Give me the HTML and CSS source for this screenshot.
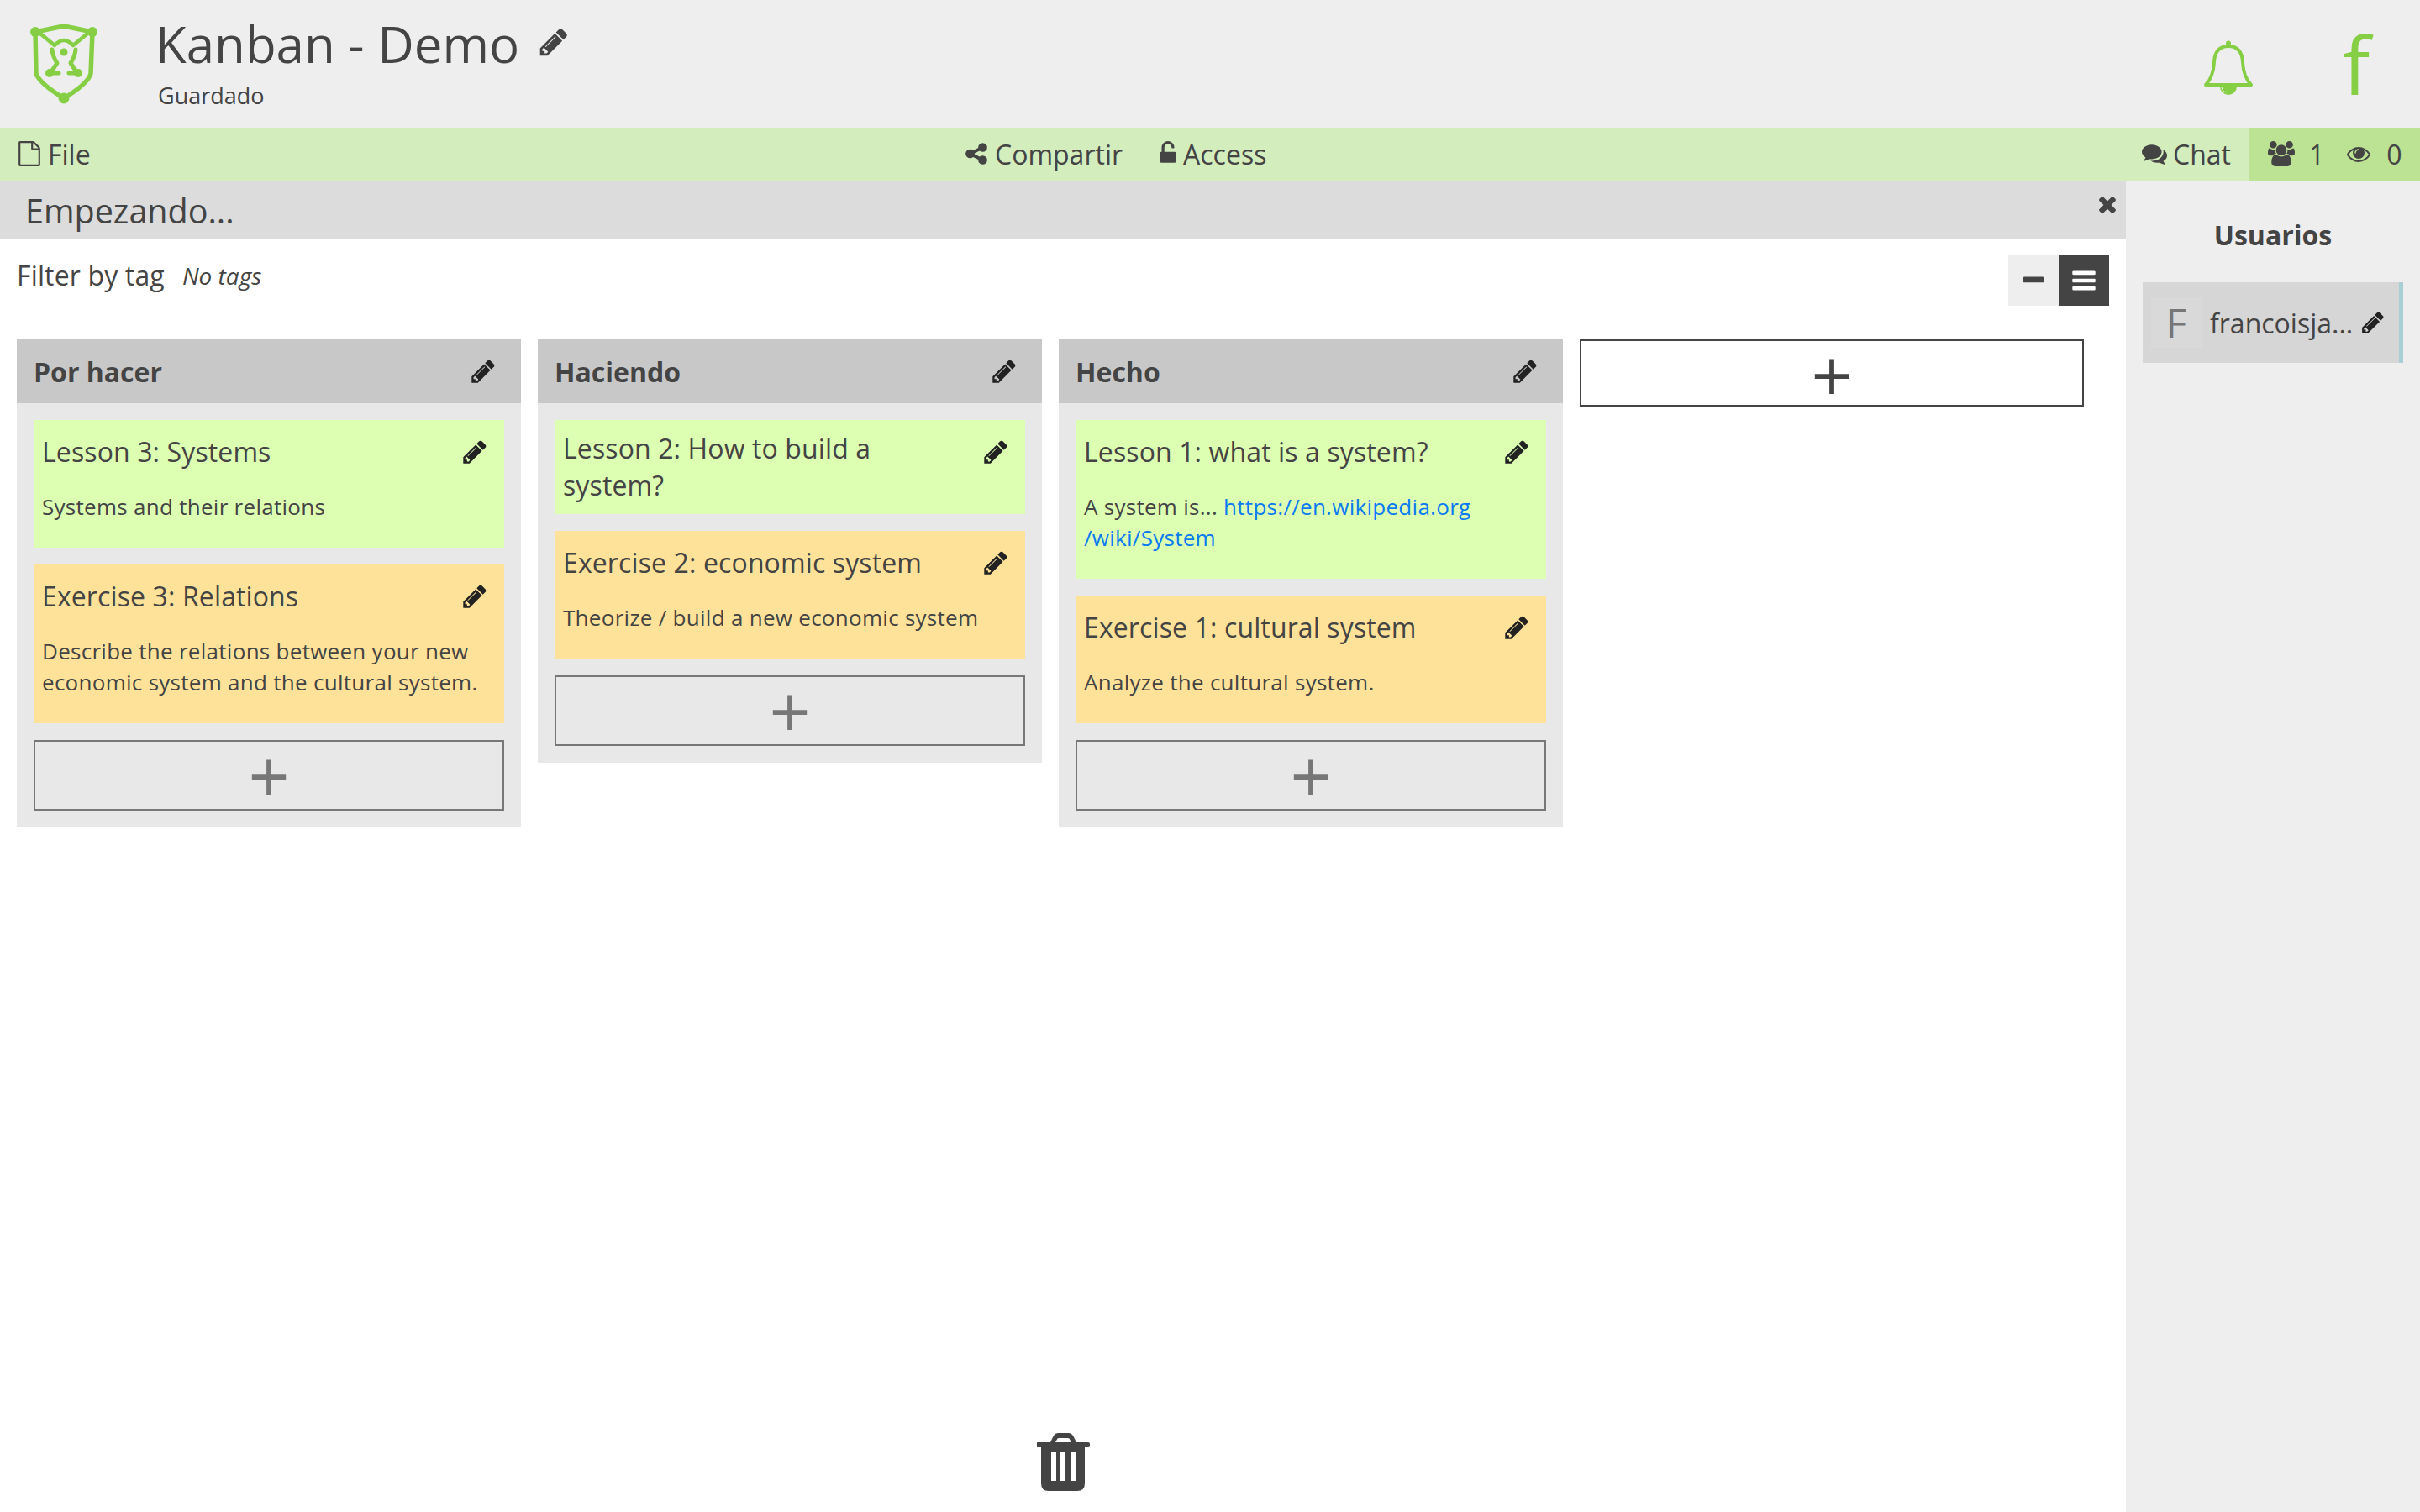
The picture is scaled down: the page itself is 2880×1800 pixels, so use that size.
FILE: index.html
```html
<!DOCTYPE html>
<html lang="en">
<head>
<meta charset="utf-8">
<title>Kanban - Demo</title>
<link rel="stylesheet" href="styles.css">
</head>
<body>
<svg class="defs" width="0" height="0" aria-hidden="true">
<symbol id="i-pencil" viewBox="0 0 1792 1792"><path d="M491 1536l91-91-235-235-91 91v107h128v128h107zm523-928q0-22-22-22-10 0-17 7l-542 542q-7 7-7 17 0 22 22 22 10 0 17-7l542-542q7-7 7-17zm-54-192l416 416-832 832h-416v-416zm683 96q0 53-37 90l-166 166-416-416 166-165q36-38 90-38 53 0 91 38l235 234q37 39 37 91z"/></symbol>
<symbol id="i-file" viewBox="0 0 1792 1792"><path d="M1596 380q28 28 48 76t20 88v1152q0 40-28 68t-68 28h-1344q-40 0-68-28t-28-68v-1600q0-40 28-68t68-28h896q40 0 88 20t76 48zm-444-244v376h376q-10-29-22-41l-313-313q-12-12-41-22zm384 1528v-1024h-416q-40 0-68-28t-28-68v-416h-768v1536h1280z"/></symbol>
<symbol id="i-share" viewBox="0 0 1792 1792"><path d="M1344 1024q133 0 226.5 93.5t93.5 226.5-93.5 226.5-226.5 93.5-226.5-93.5-93.5-226.5q0-12 2-34l-360-180q-92 86-218 86-133 0-226.5-93.5t-93.5-226.5 93.5-226.5 226.5-93.5q126 0 218 86l360-180q-2-22-2-34 0-133 93.5-226.5t226.5-93.5 226.5 93.5 93.5 226.5-93.5 226.5-226.5 93.5q-126 0-218-86l-360 180q2 22 2 34t-2 34l360 180q92-86 218-86z"/></symbol>
<symbol id="i-unlock" viewBox="256 0 1280 1792"><path d="M1376 768q40 0 68 28t28 68v576q0 40-28 68t-68 28h-960q-40 0-68-28t-28-68v-576q0-40 28-68t68-28h32v-320q0-185 131.5-316.5t316.5-131.5 316.5 131.5 131.5 316.5q0 26-19 45t-45 19h-64q-26 0-45-19t-19-45q0-106-75-181t-181-75-181 75-75 181v320h736z"/></symbol>
<symbol id="i-comments" viewBox="0 0 1792 1792"><path d="M1408 768q0 139-94 257t-256.5 186.5-353.5 68.5q-86 0-176-16-124 88-278 128-36 9-86 16h-3q-11 0-20.5-8t-11.5-21q-1-3-1-6.5t.5-6.5 2-6l2.5-5 3.5-5.5 4-5 4.5-5 4-4.5q5-6 23-25t26-29.5 22.5-29 25-38.5 20.5-44q-124-72-195-177t-71-224q0-139 94-257t256.5-186.5 353.5-68.5 353.5 68.5 256.5 186.5 94 257zm384 256q0 120-71 224.5t-195 176.5q10 24 20.5 44t25 38.5 22.5 29 26 29.5 23 25q1 1 4 4.5t4.5 5 4 5 3.5 5.5l2.5 5 2 6 .5 6.5-1 6.5q-3 14-13 22t-22 7q-50-7-86-16-154-40-278-128-90 16-176 16-271 0-472-132 58 4 88 4 161 0 309-45t264-129q125-92 192-212t67-254q0-77-23-152 129 71 204 178t75 230z"/></symbol>
<symbol id="i-users" viewBox="0 0 1920 1792"><path d="M593 896q-162 5-265 128h-134q-82 0-138-40.5t-56-118.5q0-353 124-353 6 0 43.5 21t97.5 42.5 119 21.5q67 0 133-23-5 37-5 66 0 139 81 256zm1071 637q0 120-73 189.5t-194 69.5h-874q-121 0-194-69.5t-73-189.5q0-53 3.5-103.5t14-109 26.5-108.5 43-97.5 62-81 85.5-53.5 111.5-20q10 0 43 21.5t73 48 107 48 135 21.5 135-21.5 107-48 73-48 43-21.5q61 0 111.5 20t85.5 53.5 62 81 43 97.5 26.5 108.5 14 109 3.5 103.5zm-1024-1277q0 106-75 181t-181 75-181-75-75-181 75-181 181-75 181 75 75 181zm704 384q0 159-112.5 271.5t-271.5 112.5-271.5-112.5-112.5-271.5 112.5-271.5 271.5-112.5 271.5 112.5 112.5 271.5zm576 225q0 78-56 118.5t-138 40.5h-134q-103-123-265-128 81-117 81-256 0-29-5-66 66 23 133 23 59 0 119-21.5t97.5-42.5 43.5-21q124 0 124 353zm-128-609q0 106-75 181t-181 75-181-75-75-181 75-181 181-75 181 75 75 181z"/></symbol>
<symbol id="i-eye" viewBox="0 0 1792 1792"><path d="M1664 960q-152-236-381-353 61 104 61 225 0 185-131.5 316.5t-316.5 131.5-316.5-131.5-131.5-316.5q0-121 61-225-229 117-381 353 133 205 333.5 326.5t434.5 121.5 434.5-121.5 333.5-326.5zm-720-384q0-20-14-34t-34-14q-125 0-214.5 89.5t-89.5 214.5q0 20 14 34t34 14 34-14 14-34q0-86 61-147t147-61q20 0 34-14t14-34zm848 384q0 34-20 69-140 230-376.5 368.5t-499.5 138.5-499.5-139-376.5-368q-20-35-20-69t20-69q140-229 376.5-368t499.5-139 499.5 139 376.5 368q20 35 20 69z"/></symbol>
<symbol id="i-close" viewBox="0 0 1792 1792"><path d="M1490 1322q0 40-28 68l-136 136q-28 28-68 28t-68-28l-294-294-294 294q-28 28-68 28t-68-28l-136-136q-28-28-28-68t28-68l294-294-294-294q-28-28-28-68t28-68l136-136q28-28 68-28t68 28l294 294 294-294q28-28 68-28t68 28l136 136q28 28 28 68t-28 68l-294 294 294 294q28 28 28 68z"/></symbol>
<symbol id="i-minus" viewBox="0 0 1792 1792"><path d="M1600 736v192q0 40-28 68t-68 28h-1216q-40 0-68-28t-28-68v-192q0-40 28-68t68-28h1216q40 0 68 28t28 68z"/></symbol>
<symbol id="i-bars" viewBox="0 0 1792 1792"><path d="M1664 1344v128q0 26-19 45t-45 19h-1408q-26 0-45-19t-19-45v-128q0-26 19-45t45-19h1408q26 0 45 19t19 45zm0-512v128q0 26-19 45t-45 19h-1408q-26 0-45-19t-19-45v-128q0-26 19-45t45-19h1408q26 0 45 19t19 45zm0-512v128q0 26-19 45t-45 19h-1408q-26 0-45-19t-19-45v-128q0-26 19-45t45-19h1408q26 0 45 19t19 45z"/></symbol>
</svg>

<header class="topbar">
  <svg class="logo" viewBox="0 0 120 120" aria-label="logo">
    <g fill="none" stroke="#86cf45" stroke-width="5.500" stroke-linejoin="round" stroke-linecap="round">
      <path d="M22 28 L56 21 L90 28 L88 78 Q84 90 56 107 Q28 90 23 78 Z"/>
      <path stroke-width="4.500" d="M28 30 L45 44 Q56 32 67 44 L84 30"/>
      <path stroke-width="5" d="M42 49 Q43 58 48 65 L40 77 L50 77 M70 49 Q69 58 64 65 L72 77 L62 77"/>
    </g>
    <g fill="#86cf45">
      <circle cx="22" cy="28" r="6"/><circle cx="90" cy="28" r="6"/><circle cx="56" cy="107" r="6.500"/>
      <circle cx="56" cy="52" r="4.500"/><circle cx="39" cy="77" r="5"/><circle cx="73" cy="77" r="5"/>
    </g>
  </svg>
  <div class="doc">
    <h1 class="doc-title">Kanban - Demo <svg class="icon pen-title"><use href="#i-pencil"/></svg></h1>
    <div class="doc-status">Guardado</div>
  </div>
  <svg class="bell" viewBox="0 0 60 66" aria-label="notifications">
    <path fill="none" stroke="#86cf45" stroke-width="4" stroke-linejoin="round" d="M3 53 Q12 44 13 26 Q14 7 30 7 Q46 7 47 26 Q48 44 57 53 Z"/>
    <circle cx="30" cy="3.500" r="3" fill="#86cf45"/>
    <path d="M20 55 A10 10 0 0 0 40 55 Z" fill="#86cf45"/>
    <path d="M22 56 A7 7 0 0 0 28 62" fill="none" stroke="#eee" stroke-width="1"/>
  </svg>
  <div class="avatar-letter">f</div>
</header>

<nav class="toolbar">
  <div class="tool-left"><a class="tool"><svg class="icon i30"><use href="#i-file"/></svg>File</a></div>
  <div class="tool-center">
    <a class="tool"><svg class="icon i30"><use href="#i-share"/></svg>Compartir</a>
    <a class="tool"><svg class="icon i-lock"><use href="#i-unlock"/></svg>Access</a>
  </div>
  <a class="tool tool-chat"><svg class="icon i30"><use href="#i-comments"/></svg>Chat</a>
  <div class="stats">
    <svg class="icon i-users"><use href="#i-users"/></svg><span class="stat">1</span>
    <svg class="icon i-eye"><use href="#i-eye"/></svg><span class="stat">0</span>
  </div>
</nav>

<div class="main">
  <main class="content">
    <div class="banner">
      <span class="banner-text">Empezando...</span>
      <svg class="icon banner-close"><use href="#i-close"/></svg>
    </div>
    <div class="filter">
      <span class="filter-label">Filter by tag</span>
      <em class="filter-none">No tags</em>
      <div class="toggle">
        <span class="toggle-btn"><svg class="icon"><use href="#i-minus"/></svg></span>
        <span class="toggle-btn on"><svg class="icon"><use href="#i-bars"/></svg></span>
      </div>
    </div>
    <div class="board">
      <section class="column">
        <div class="col-head"><span>Por hacer</span><svg class="icon pen-dark"><use href="#i-pencil"/></svg></div>
        <div class="col-body">
          <article class="card lesson">
            <div class="card-head"><span>Lesson 3: Systems</span><svg class="icon pen-dark"><use href="#i-pencil"/></svg></div>
            <p class="card-desc">Systems and their relations</p>
          </article>
          <article class="card exercise">
            <div class="card-head"><span>Exercise 3: Relations</span><svg class="icon pen-dark"><use href="#i-pencil"/></svg></div>
            <p class="card-desc">Describe the relations between your new economic system and the cultural system.</p>
          </article>
          <button class="add-card">+</button>
        </div>
      </section>
      <section class="column">
        <div class="col-head"><span>Haciendo</span><svg class="icon pen-dark"><use href="#i-pencil"/></svg></div>
        <div class="col-body">
          <article class="card lesson">
            <div class="card-head"><span>Lesson 2: How to build a system?</span><svg class="icon pen-dark"><use href="#i-pencil"/></svg></div>
          </article>
          <article class="card exercise">
            <div class="card-head"><span>Exercise 2: economic system</span><svg class="icon pen-dark"><use href="#i-pencil"/></svg></div>
            <p class="card-desc">Theorize / build a new economic system</p>
          </article>
          <button class="add-card">+</button>
        </div>
      </section>
      <section class="column">
        <div class="col-head"><span>Hecho</span><svg class="icon pen-dark"><use href="#i-pencil"/></svg></div>
        <div class="col-body">
          <article class="card lesson">
            <div class="card-head"><span>Lesson 1: what is a system?</span><svg class="icon pen-dark"><use href="#i-pencil"/></svg></div>
            <p class="card-desc">A system is... <a class="link">https://en.wikipedia.org<br>/wiki/System</a></p>
          </article>
          <article class="card exercise">
            <div class="card-head"><span>Exercise 1: cultural system</span><svg class="icon pen-dark"><use href="#i-pencil"/></svg></div>
            <p class="card-desc">Analyze the cultural system.</p>
          </article>
          <button class="add-card">+</button>
        </div>
      </section>
      <button class="add-column">+</button>
    </div>
    <svg class="trash" viewBox="0 0 63 69" aria-label="delete">
      <path fill="#444" fill-rule="evenodd" d="M2 11 h14 l4 -8 q2 -3 5 -3 h13 q3 0 5 3 l4 8 h14 a2 2 0 0 1 2 2 v2 a2 2 0 0 1 -2 2 h-4 v43 q0 9 -9 9 h-34 q-9 0 -9 -9 v-43 h-4 a2 2 0 0 1 -2 -2 v-2 a2 2 0 0 1 2 -2 z M22 11 h19 l-2.500 -4.500 q-.5 -.5 -1.500 -.5 h-11 q-1 0 -1.500 .5 z M17 23 v34 h6 v-34 z M28 23 v34 h6 v-34 z M40 23 v34 h6 v-34 z"/>
    </svg>
  </main>
  <aside class="sidebar">
    <h2 class="side-title">Usuarios</h2>
    <div class="user">
      <span class="user-initial">F</span>
      <span class="user-name">francoisja...</span>
      <svg class="icon pen-dark"><use href="#i-pencil"/></svg>
    </div>
  </aside>
</div>
</body>
</html>
```
FILE: styles.css
```css
* { box-sizing: border-box; }
html, body { margin: 0; height: 100%; overflow: hidden; }
body {
  display: flex;
  flex-direction: column;
  font-family: "Open Sans", "Noto Sans", sans-serif;
  color: #444;
  background: #fff;
}
.defs { position: absolute; }
.icon { fill: currentColor; display: block; flex: none; }

.topbar {
  height: 152px;
  background: #eee;
  display: flex;
  align-items: flex-start;
  flex: none;
}
.logo { width: 120px; height: 120px; margin: 10px 0 0 20px; flex: none; }
.doc { margin-left: 45px; padding-top: 12px; flex: 1; }
.doc-title {
  margin: 0;
  font-size: 60px;
  font-weight: 400;
  line-height: 80px;
  display: flex;
  align-items: center;
}
.pen-title { width: 38px; height: 38px; margin-left: 22px; margin-top: -4px; }
.doc-status { font-size: 27px; line-height: 38px; margin: 3px 0 0 3px; }
.bell { width: 60px; height: 66px; margin-top: 48px; flex: none; }
.avatar-letter {
  width: 198px;
  padding-left: 106px;
  font-size: 96px;
  line-height: 152px;
  color: #86cf45;
  flex: none;
}

.toolbar {
  height: 64px;
  background: #d4edbc;
  display: flex;
  align-items: stretch;
  font-size: 32px;
  flex: none;
}
.tool { display: flex; align-items: center; gap: 7px; padding-bottom: 2px; }
.tool-left { width: 1147px; padding-left: 20px; display: flex; }
.tool-center { flex: 1; display: flex; gap: 43px; }
.tool-chat { margin-right: 22px; }
.i30 { width: 30px; height: 30px; }
.i-lock { width: 22px; height: 30px; }
.i-users { width: 32px; height: 32px; }
.i-eye { width: 28px; height: 28px; }
.stats {
  width: 203px;
  background: #bce294;
  display: flex;
  align-items: center;
  padding-left: 22px;
  padding-bottom: 2px;
}
.stat { margin: 0 27px 0 17px; }
.stat:last-child { margin: 0 0 0 19px; }

.main { flex: 1; display: flex; min-height: 0; }
.content { flex: 1; position: relative; min-width: 0; }
.banner {
  height: 68px;
  background: #dcdcdc;
  display: flex;
  justify-content: space-between;
  padding: 0 7px 0 30px;
}
.banner-text { font-size: 39.5px; line-height: 70px; }
.banner-close { width: 30px; height: 30px; margin-top: 12px; }

.filter {
  height: 120px;
  display: flex;
  padding: 20px 20px 0;
  align-items: flex-start;
}
.filter-label { font-size: 32px; line-height: 48px; letter-spacing: 0.15px; }
.filter-none { font-size: 28px; line-height: 48px; margin-left: 21px; flex: 1; }
.toggle { display: flex; }
.toggle-btn {
  width: 60px;
  height: 60px;
  background: #eee;
  display: flex;
  align-items: center;
  justify-content: center;
}
.toggle-btn .icon { width: 32px; height: 32px; }
.toggle-btn.on { background: #444; color: #fff; }

.board { display: flex; align-items: flex-start; gap: 20px; padding: 0 20px; }
.column { width: 600px; background: #e8e8e8; flex: none; }
.col-head {
  height: 76px;
  background: #c8c8c8;
  display: flex;
  align-items: center;
  justify-content: space-between;
  padding: 0 29px 0 20px;
  font-size: 32px;
  font-weight: 700;
}
.pen-dark { width: 32px; height: 32px; color: #222; }
.col-body { padding: 20px; display: flex; flex-direction: column; gap: 20px; }
.card { font-size: 26px; }
.lesson { background: #dcffb2; }
.exercise { background: #ffe299; }
.card-head {
  min-height: 76px;
  display: flex;
  align-items: center;
  justify-content: space-between;
  padding: 12px 19px 12px 10px;
  font-size: 32px;
  line-height: 44px;
  letter-spacing: 0.12px;
}
.card-head span { max-width: 440px; }
.card-head .pen-dark { align-self: flex-start; margin-top: 10px; }
.card-desc { margin: 9px 0 0; padding: 0 20px 30px 10px; line-height: 37px; letter-spacing: 0.28px; }
.link { color: #0a7bf0; }
.add-card, .add-column {
  font-family: inherit;
  padding: 0;
  font-size: 86px;
  line-height: 60px;
  cursor: pointer;
}
.add-card {
  height: 84px;
  background: transparent;
  border: 2px solid #777;
  color: #777;
}
.add-column {
  width: 600px;
  height: 80px;
  padding-top: 4px;
  background: #fff;
  border: 2px solid #444;
  color: #444;
  flex: none;
}
.trash {
  position: absolute;
  width: 63px;
  height: 69px;
  left: 1234px;
  bottom: 25px;
}

.sidebar {
  width: 350px;
  background: #eee;
  padding: 42px 20px 0;
  flex: none;
}
.side-title {
  margin: 0;
  font-size: 32px;
  line-height: 44px;
  text-align: center;
  font-weight: 700;
}
.user {
  height: 96px;
  margin-top: 34px;
  background: #d6d6d6;
  border-right: 5px solid #a8d0d4;
  display: flex;
  align-items: center;
  padding-left: 10px;
}
.user-initial {
  width: 60px;
  height: 60px;
  background: #d9d9d9;
  color: #777;
  font-size: 48px;
  line-height: 60px;
  text-align: center;
  flex: none;
}
.user-name { font-size: 32px; margin: 0 9px 0 10px; white-space: nowrap; }
.user .pen-dark { width: 30px; height: 30px; }
```
